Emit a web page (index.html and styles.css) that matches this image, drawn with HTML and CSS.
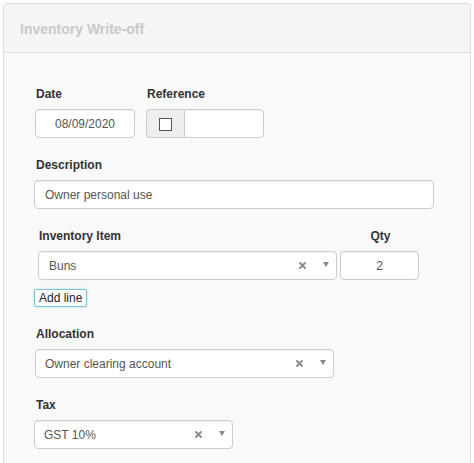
FILE: index.html
```html
<!DOCTYPE html>
<html>
<head>
<meta charset="utf-8">
<link rel="stylesheet" href="styles.css">
</head>
<body>
<div class="panel">
  <div class="panel-head">Inventory Write-off</div>
  <div class="panel-body">
    <div class="row-fields">
      <div class="field">
        <div class="label">Date</div>
        <div class="input date">08/09/2020</div>
      </div>
      <div class="field">
        <div class="label">Reference</div>
        <div class="group">
          <div class="addon"><span class="check"></span></div>
          <div class="input ref"></div>
        </div>
      </div>
    </div>

    <div class="field block">
      <div class="label">Description</div>
      <div class="input desc">Owner personal use</div>
    </div>

    <div class="lines block">
      <div class="line-head">
        <div class="label item-col">Inventory Item</div>
        <div class="label qty-col">Qty</div>
      </div>
      <div class="line-row">
        <div class="input select item-sel"><span class="val">Buns</span><svg class="clear" width="7" height="7" viewBox="0 0 7 7"><path d="M1 1L6 6M6 1L1 6" stroke="#888" stroke-width="1.8" stroke-linecap="round"/></svg><span class="arrow"></span></div>
        <div class="input qty">2</div>
      </div>
      <button class="add-line">Add line</button>
    </div>

    <div class="field block">
      <div class="label">Allocation</div>
      <div class="input select alloc"><span class="val">Owner clearing account</span><svg class="clear" width="7" height="7" viewBox="0 0 7 7"><path d="M1 1L6 6M6 1L1 6" stroke="#888" stroke-width="1.8" stroke-linecap="round"/></svg><span class="arrow"></span></div>
    </div>

    <div class="field block">
      <div class="label">Tax</div>
      <div class="input select tax"><span class="val">GST 10%</span><svg class="clear" width="7" height="7" viewBox="0 0 7 7"><path d="M1 1L6 6M6 1L1 6" stroke="#888" stroke-width="1.8" stroke-linecap="round"/></svg><span class="arrow"></span></div>
    </div>
  </div>
</div>
</body>
</html>
```

FILE: styles.css
```css
html, body {
  margin: 0;
  padding: 0;
  background: #ffffff;
  font-family: "Liberation Sans", Arial, sans-serif;
  font-size: 12px;
  color: #333;
}

.panel {
  margin: 3px 3px 0 3px;
  height: 460px;
  border: 1px solid #dddddd;
  border-bottom: none;
  border-radius: 4px 4px 0 0;
  background: #f9f9f9;
  box-sizing: border-box;
  overflow: hidden;
}

.panel-head {
  background: #f5f5f5;
  border-bottom: 1px solid #dddddd;
  padding-left: 16px;
  padding-top: 1px;
  box-sizing: border-box;
  height: 49px;
  display: flex;
  align-items: center;
  font-size: 14px;
  font-weight: bold;
  color: #c9c9c9;
}

.panel-body {
  padding: 33px 0 0 31px;
}

.row-fields {
  display: flex;
  gap: 11px;
}

.label {
  font-weight: bold;
  font-size: 12px;
  line-height: 15px;
  color: #333;
  padding-top: 1px;
  margin-bottom: 7px;
  padding-left: 1px;
}

.block {
  margin-top: 19px;
}

.input {
  box-sizing: border-box;
  height: 29px;
  background: #fff;
  border: 1px solid #cccccc;
  border-radius: 4px;
  box-shadow: inset 0 1px 1px rgba(0,0,0,0.05);
  display: flex;
  align-items: center;
  font-size: 12px;
  color: #555;
  padding: 0 10px;
}

.date {
  width: 100px;
  justify-content: center;
  padding: 0;
}

.group {
  display: flex;
}

.addon {
  box-sizing: border-box;
  width: 38px;
  height: 29px;
  background: #eeeeee;
  border: 1px solid #cccccc;
  border-right: none;
  border-radius: 4px 0 0 4px;
  display: flex;
  align-items: center;
  justify-content: center;
}

.check {
  box-sizing: border-box;
  width: 13px;
  height: 13px;
  border: 1px solid #555;
  background: #fff;
  margin-top: 1px;
}

.ref {
  width: 80px;
  border-radius: 0 4px 4px 0;
}

.desc {
  width: 400px;
  margin-left: -1px;
}

.lines {
  padding-left: 3px;
}

.line-head {
  display: flex;
}

.item-col {
  width: 302px;
}

.qty-col {
  width: 79px;
  text-align: center;
  padding-left: 0;
}

.line-row {
  display: flex;
  gap: 3px;
}

.select {
  padding-right: 0;
}

.select .val {
  flex: 1;
}

.clear {
  display: block;
  margin-right: 17px;
}

.arrow {
  width: 0;
  height: 0;
  border-left: 3px solid transparent;
  border-right: 3px solid transparent;
  border-top: 5px solid #888;
  margin-right: 7px;
  margin-top: -2px;
}

.item-sel {
  width: 299px;
}

.qty {
  width: 79px;
  justify-content: center;
  padding: 0;
}

.add-line {
  margin-top: 9px;
  margin-left: -4px;
  height: 18px;
  padding: 0 4px;
  background: #fff;
  border: 1px solid #7cc3d9;
  border-radius: 2px;
  box-shadow: 0 0 2px rgba(91,192,222,0.6);
  font-family: "Liberation Sans", Arial, sans-serif;
  font-size: 12px;
  color: #222;
  line-height: 14px;
  display: block;
}

.alloc {
  width: 299px;
  padding-left: 9px;
}

.tax {
  width: 199px;
  margin-left: -1px;
  padding-left: 9px;
}
```
